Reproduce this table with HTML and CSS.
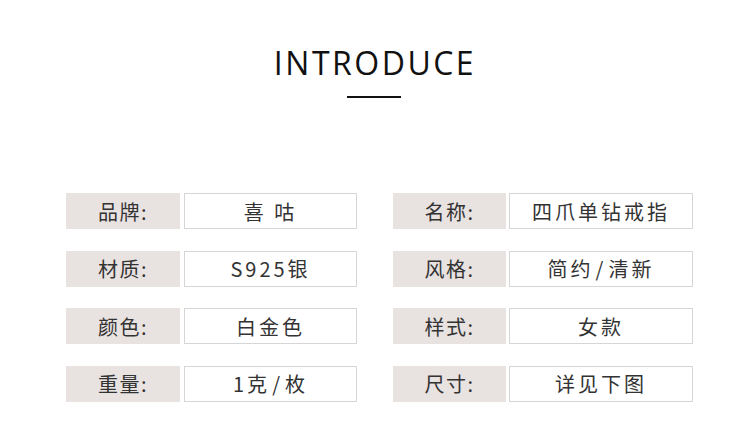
FILE: index.html
```html
<!DOCTYPE html>
<html lang="zh-CN">
<head>
<meta charset="utf-8">
<link rel="stylesheet" href="styles.css">
</head>
<body>
<div class="page">
  <h1 class="title">INTRODUCE</h1>
  <div class="rule"></div>
  <div class="table">
    <div class="row">
      <div class="pair left"><div class="label">品牌:</div><div class="value">喜 咕</div></div>
      <div class="pair right"><div class="label">名称:</div><div class="value">四爪单钻戒指</div></div>
    </div>
    <div class="row">
      <div class="pair left"><div class="label">材质:</div><div class="value">S925银</div></div>
      <div class="pair right"><div class="label">风格:</div><div class="value">简约<span class="sep">/</span>清新</div></div>
    </div>
    <div class="row">
      <div class="pair left"><div class="label">颜色:</div><div class="value">白金色</div></div>
      <div class="pair right"><div class="label">样式:</div><div class="value">女款</div></div>
    </div>
    <div class="row">
      <div class="pair left"><div class="label">重量:</div><div class="value">1克<span class="sep">/</span>枚</div></div>
      <div class="pair right"><div class="label">尺寸:</div><div class="value">详见下图</div></div>
    </div>
  </div>
</div>
</body>
</html>
```
FILE: styles.css
```css
html, body {
  margin: 0;
  padding: 0;
  background: #fff;
}
.page {
  width: 750px;
  height: 448px;
  overflow: hidden;
  font-family: "Noto Sans CJK SC", "Noto Sans", sans-serif;
  color: #333;
}
.title {
  margin: 0;
  padding-top: 43px;
  font-family: "Open Sans", "Noto Sans", sans-serif;
  font-weight: 400;
  font-size: 32px;
  line-height: 40px;
  letter-spacing: 2.5px;
  text-align: center;
  color: #111;
}
.rule {
  width: 54px;
  height: 2px;
  background: #111;
  margin: 13px auto 0 347px;
}
.table {
  margin-top: 95px;
  padding-left: 66px;
  display: flex;
  flex-direction: column;
  gap: 21.5px;
}
.row {
  display: flex;
  height: 36px;
}
.pair {
  display: flex;
  gap: 4px;
}
.pair.right {
  margin-left: 36px;
}
.label {
  background: #e8e2e1;
  display: flex;
  align-items: center;
  justify-content: center;
  font-size: 20px;
  letter-spacing: 1.5px;
  color: #333;
}
.left .label { width: 114px; }
.right .label { width: 113px; }
.value {
  box-sizing: border-box;
  border: 1px solid #d6d6d6;
  display: flex;
  align-items: center;
  justify-content: center;
  font-size: 20px;
  letter-spacing: 3px;
  color: #333;
  white-space: pre;
}
.sep {
  padding: 0 2px;
}
.left .value { width: 173px; }
.right .value { width: 184px; margin-left: -1px; }
```
